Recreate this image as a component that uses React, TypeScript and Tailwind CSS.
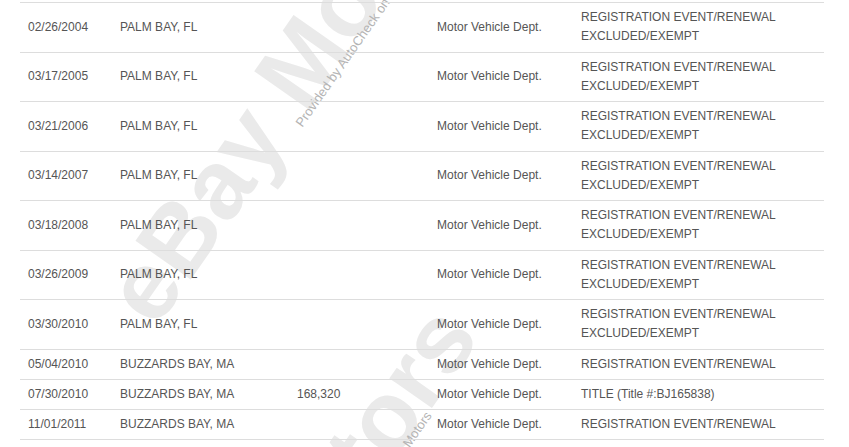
const rows = [
  { date: '02/26/2004', place: 'PALM BAY, FL', odo: '', source: 'Motor Vehicle Dept.', details: ['REGISTRATION EVENT/RENEWAL', 'EXCLUDED/EXEMPT'] },
  { date: '03/17/2005', place: 'PALM BAY, FL', odo: '', source: 'Motor Vehicle Dept.', details: ['REGISTRATION EVENT/RENEWAL', 'EXCLUDED/EXEMPT'] },
  { date: '03/21/2006', place: 'PALM BAY, FL', odo: '', source: 'Motor Vehicle Dept.', details: ['REGISTRATION EVENT/RENEWAL', 'EXCLUDED/EXEMPT'] },
  { date: '03/14/2007', place: 'PALM BAY, FL', odo: '', source: 'Motor Vehicle Dept.', details: ['REGISTRATION EVENT/RENEWAL', 'EXCLUDED/EXEMPT'] },
  { date: '03/18/2008', place: 'PALM BAY, FL', odo: '', source: 'Motor Vehicle Dept.', details: ['REGISTRATION EVENT/RENEWAL', 'EXCLUDED/EXEMPT'] },
  { date: '03/26/2009', place: 'PALM BAY, FL', odo: '', source: 'Motor Vehicle Dept.', details: ['REGISTRATION EVENT/RENEWAL', 'EXCLUDED/EXEMPT'] },
  { date: '03/30/2010', place: 'PALM BAY, FL', odo: '', source: 'Motor Vehicle Dept.', details: ['REGISTRATION EVENT/RENEWAL', 'EXCLUDED/EXEMPT'] },
  { date: '05/04/2010', place: 'BUZZARDS BAY, MA', odo: '', source: 'Motor Vehicle Dept.', details: ['REGISTRATION EVENT/RENEWAL'] },
  { date: '07/30/2010', place: 'BUZZARDS BAY, MA', odo: '168,320', source: 'Motor Vehicle Dept.', details: ['TITLE (Title #:BJ165838)'] },
  { date: '11/01/2011', place: 'BUZZARDS BAY, MA', odo: '', source: 'Motor Vehicle Dept.', details: ['REGISTRATION EVENT/RENEWAL'] },
]

// watermark tiles: big "eBay Motors" and the small AutoCheck line
const marks = [
  { big: [168, 240], small: [304, 116] },
  { big: [156, 730], small: [302, 592] },
]

export default function App() {
  return (
    <div className="relative w-[849px] h-[447px] overflow-hidden bg-white font-['Liberation_Sans',Arial,sans-serif]">
      <div className="pointer-events-none absolute inset-0 select-none">
        {marks.map((m, i) => (
          <div key={i}>
            <span
              className="absolute origin-bottom-left -rotate-[55deg] whitespace-nowrap text-[98px] leading-none font-bold text-[#eaeaea]"
              style={{ left: m.big[0], top: m.big[1] }}
            >
              eBay Motors
            </span>
            <span
              className="absolute origin-bottom-left -rotate-[55deg] whitespace-nowrap text-[13px] leading-none text-[#b4b4b4]"
              style={{ left: m.small[0], top: m.small[1] }}
            >
              Provided by AutoCheck on eBay Motors
            </span>
          </div>
        ))}
      </div>

      <div className="relative pt-0.5 pl-5 w-[824px]">
        <div className="border-b border-[#dddddd] text-[12px] leading-[19.25px] text-[#555555]">
          {rows.map((r) => (
            <div
              key={r.date}
              className="grid grid-cols-[92px_177px_140px_144px_1fr] items-center border-t border-[#dddddd] py-[5px]"
            >
              <div className="pl-2">{r.date}</div>
              <div className="pl-2">{r.place}</div>
              <div className="pl-2">{r.odo}</div>
              <div className="pl-2">{r.source}</div>
              <div className="pl-2">
                {r.details.map((d) => (
                  <div key={d}>{d}</div>
                ))}
              </div>
            </div>
          ))}
        </div>
      </div>
    </div>
  )
}
